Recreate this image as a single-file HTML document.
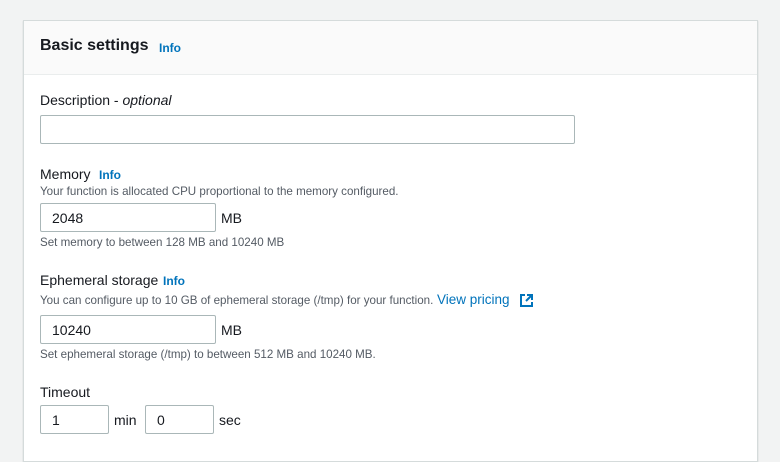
<!DOCTYPE html><html><head><style>
body{margin:0;width:780px;height:440px;overflow:hidden;background:#f2f3f3;font-family:"Liberation Sans",sans-serif;color:#16191f}
.card{position:absolute;left:23px;top:20px;width:733px;height:440px;background:#fff;border:1px solid #d5dbdb;box-shadow:0 1px 1px rgba(0,28,36,.2)}
.hd{height:53px;background:#fafafa;border-bottom:1px solid #eaeded}
.a{position:absolute;white-space:nowrap}
.info{color:#0073bb;font-weight:bold;font-size:12px}
.lbl{font-size:14px}
.sm{font-size:11.6px;color:#545b64}
.in{position:absolute;border:1px solid #aab7b8;border-radius:2px;background:#fff;box-sizing:border-box;font-size:14px;padding-left:11px;display:flex;align-items:center}
</style></head><body>
<div class="card"><div class="hd"></div></div>
<div class="a" style="left:40px;top:37px;font-size:16px;font-weight:bold">Basic settings</div>
<div class="a info" style="left:159px;top:41px">Info</div>
<div class="a lbl" style="left:40px;top:92px">Description - <i>optional</i></div>
<div class="in" style="left:40px;top:115px;width:535px;height:29px"></div>
<div class="a lbl" style="left:40px;top:166px">Memory</div><div class="a info" style="left:99px;top:168px">Info</div>
<div class="a sm" style="left:40px;top:185px">Your function is allocated CPU proportional to the memory configured.</div>
<div class="in" style="left:40px;top:203px;width:176px;height:29px">2048</div>
<div class="a lbl" style="left:221px;top:210px">MB</div>
<div class="a sm" style="left:40px;top:236px">Set memory to between 128 MB and 10240 MB</div>
<div class="a lbl" style="left:40px;top:272px">Ephemeral storage</div><div class="a info" style="left:163px;top:274px">Info</div>
<div class="a sm" style="left:40px;top:294px">You can configure up to 10 GB of ephemeral storage (/tmp) for your function.</div>
<div class="a" style="left:437px;top:292px;color:#0073bb;font-size:13.5px">View pricing</div>
<svg class="a" style="left:519px;top:293px" width="15" height="15" viewBox="0 0 15 15" fill="none" stroke="#0073bb" stroke-width="2"><path d="M6 2H2v11h11V9M8 2h5v5M13 2L7 8"/></svg>
<div class="in" style="left:40px;top:315px;width:176px;height:29px">10240</div>
<div class="a lbl" style="left:221px;top:322px">MB</div>
<div class="a sm" style="left:40px;top:348px">Set ephemeral storage (/tmp) to between 512 MB and 10240 MB.</div>
<div class="a lbl" style="left:40px;top:384px">Timeout</div>
<div class="in" style="left:40px;top:405px;width:69px;height:29px">1</div>
<div class="a lbl" style="left:114px;top:412px">min</div>
<div class="in" style="left:145px;top:405px;width:69px;height:29px">0</div>
<div class="a lbl" style="left:219px;top:412px">sec</div>
</body></html>
